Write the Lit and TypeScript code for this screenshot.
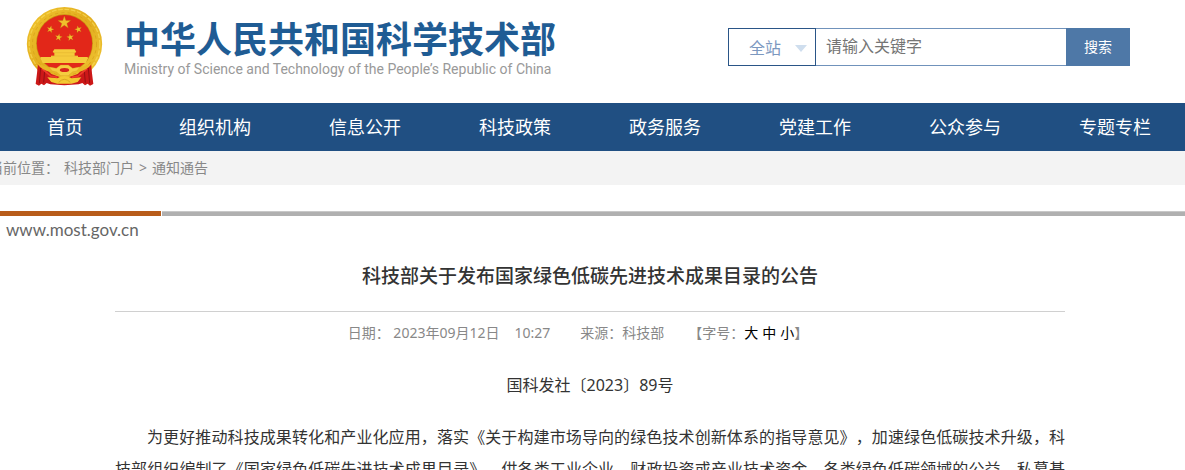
import { LitElement, html, css } from "lit";
import { customElement, state } from "lit/decorators.js";

const STAR = "0,-20 4.7,-6.5 19,-6.2 7.6,2.5 11.8,16.2 0,8 -11.8,16.2 -7.6,2.5 -19,-6.2 -4.7,-6.5";

@customElement("national-emblem")
export class NationalEmblem extends LitElement {
  static styles = css`
    :host { display: block; flex: none; }
    .emblem { display: block; width: 80px; height: 83px; }
  `;

  render() {
    return html`
      <svg class="emblem" viewBox="45 15 240 249" role="img" aria-label="国徽">
        <defs>
          <linearGradient id="gold" x1="0" y1="0" x2="1" y2="1">
            <stop offset="0" stop-color="#f0c42e" />
            <stop offset="0.5" stop-color="#e2ad1e" />
            <stop offset="1" stop-color="#f2c836" />
          </linearGradient>
        </defs>
        <ellipse cx="163.500" cy="132" rx="113" ry="111" fill="url(#gold)" />
        <ellipse cx="163.500" cy="132" rx="106" ry="104" fill="none" stroke="#f8da58" stroke-width="4" stroke-dasharray="14 5" opacity="0.7" />
        <ellipse cx="163.500" cy="132" rx="96" ry="94" fill="none" stroke="#d59e1a" stroke-width="3" stroke-dasharray="10 9" opacity="0.7" />
        <ellipse cx="163.500" cy="130" rx="85" ry="87" fill="#c98b12" />
        <ellipse cx="163.500" cy="130" rx="83" ry="85" fill="#e22719" />
        <g fill="#f0c02c" stroke="#b8780f" stroke-width="1">
          <polygon points=${STAR} transform="translate(163 68)" />
          <polygon points=${STAR} transform="translate(121 88) rotate(15) scale(.56)" />
          <polygon points=${STAR} transform="translate(205 88) rotate(-15) scale(.56)" />
          <polygon points=${STAR} transform="translate(146 112) rotate(10) scale(.56)" />
          <polygon points=${STAR} transform="translate(181 112) rotate(-10) scale(.56)" />
        </g>
        <path d="M133 148h61l5 8-5 3v8h10v4h27l4 2-8 16H98l-8-16 4-2h29v-4h10v-8l-5-3z" fill="#f5cb3c" />
        <path d="M131 158h65M124 168h79" stroke="#d8a424" stroke-width="1" />
        <path d="M84 188L104 203L124 222L163 236L203 222L223 203L243 188L246 220L250 252L240 257L233 251L225 256L217 249L206 253L163 256L121 253L110 249L102 256L94 251L87 257L77 252L81 220z" fill="#cc1818" />
        <path d="M92 204L88 250M104 212L101 248M235 204L239 250M223 212L226 248" fill="none" stroke="#960f12" stroke-width="3" />
        <path d="M96 206L122 228L142 232M231 206L205 228L185 232" fill="none" stroke="#ee3b2a" stroke-width="5" />
        <path d="M72 178Q90 196 112 201L132 204L124 216Q96 212 80 190zM255 178Q237 196 215 201L195 204L203 216Q231 212 247 190z" fill="#e8b624" />
        <path d="M117 201L139 205L152 195H175L188 205L210 201L200 213L187 216L175 227H152L140 216L127 213z" fill="#f5cd40" stroke="#d49d1c" stroke-width="1" />
        <ellipse cx="163.500" cy="210" rx="14" ry="6" fill="#d6251b" />
        <path d="M112 232L142 235Q163 221 185 235L214 232L203 246L184 251H142L124 246z" fill="#f3c832" />
        <path d="M146 247Q163 229 181 247" fill="none" stroke="#cf941b" stroke-width="2" />
      </svg>
    `;
  }
}

@customElement("site-header")
export class SiteHeader extends LitElement {
  static styles = css`
    :host { display: block; }
    .header {
      display: flex;
      justify-content: space-between;
      align-items: flex-start;
      gap: 24px;
      min-height: 98px;
      padding: 5px 55px 0 25px;
    }
    .brand { display: flex; gap: 19px; color: inherit; text-decoration: none; }
    .names { padding-top: 14px; white-space: nowrap; }
    .name { margin: 0; font-size: 36px; line-height: 42px; font-weight: 700; color: #1f5c94; }
    .english { margin: 0; font-family: Roboto, sans-serif; font-size: 14px; line-height: 16px; color: #999; }
    .search { display: flex; height: 38px; margin-top: 23px; }
    .scope { position: relative; width: 88px; }
    .select, .keyword, .submit {
      box-sizing: border-box;
      height: 100%;
      margin: 0;
      border-radius: 0;
      font-family: inherit;
      outline: none;
    }
    .select {
      width: 100%;
      padding: 2px 20px 0 20px;
      border: 1px solid #2a5587;
      appearance: none;
      background: #fff;
      font-size: 16px;
      color: #7c98bf;
    }
    .arrow {
      position: absolute;
      right: 9px;
      top: 17px;
      width: 12px;
      height: 7px;
      background: #cfdeee;
      clip-path: polygon(0 0, 100% 0, 50% 100%);
      pointer-events: none;
    }
    .keyword {
      width: 250px;
      padding: 0 10px 2px;
      border: 1px solid #7092bb;
      border-width: 1px 0;
      background: #fff;
      font-size: 16px;
      color: #333;
    }
    .keyword::placeholder { color: #757575; opacity: 1; }
    .submit {
      width: 64px;
      padding: 0 0 2px;
      border: 0;
      background: #4e78a7;
      font-size: 14px;
      color: #fff;
    }
  `;

  render() {
    return html`
      <header class="header">
        <a class="brand" href="#">
          <national-emblem></national-emblem>
          <div class="names">
            <p class="name">中华人民共和国科学技术部</p>
            <p class="english" lang="en">Ministry of Science and Technology of the People’s Republic of China</p>
          </div>
        </a>
        <form class="search" @submit=${(e: Event) => e.preventDefault()}>
          <div class="scope">
            <select class="select" aria-label="搜索范围">
              <option>全站</option>
            </select>
            <span class="arrow"></span>
          </div>
          <input class="keyword" type="text" aria-label="关键字" placeholder="请输入关键字" />
          <button class="submit" type="submit">搜索</button>
        </form>
      </header>
    `;
  }
}

@customElement("site-nav")
export class SiteNav extends LitElement {
  static styles = css`
    :host { display: block; }
    .nav { background: #204f82; overflow: hidden; }
    .items {
      display: grid;
      grid-template-columns: repeat(8, 1fr);
      margin: 0 -5px 0 -10px;
      padding: 0;
      list-style: none;
    }
    .link {
      display: block;
      font-size: 18px;
      line-height: 48px;
      text-align: center;
      white-space: nowrap;
      color: #fff;
      text-decoration: none;
    }
  `;

  private items = ["首页", "组织机构", "信息公开", "科技政策", "政务服务", "党建工作", "公众参与", "专题专栏"];

  render() {
    return html`
      <nav class="nav">
        <ul class="items">
          ${this.items.map((item) => html`<li><a class="link" href="#">${item}</a></li>`)}
        </ul>
      </nav>
    `;
  }
}

@customElement("notice-article")
export class NoticeArticle extends LitElement {
  static styles = css`
    :host { display: block; }
    .article { margin: 0 120px 0 115px; color: #333; }
    .title {
      margin: 0;
      padding: 18px 0 21px;
      border-bottom: 1px solid #d0d0d0;
      font-size: 19px;
      line-height: 28px;
      font-weight: 500;
      text-align: center;
    }
    .meta {
      display: flex;
      justify-content: center;
      padding-right: 24px;
      font-size: 14px;
      line-height: 42px;
      color: #888;
      white-space: nowrap;
    }
    .time { margin: 0 30px 0 15px; }
    .sizes { display: flex; margin-left: 24px; }
    .choices { display: flex; gap: 4px; }
    .size {
      padding: 0;
      border: 0;
      background: none;
      font: inherit;
      color: #000;
      cursor: pointer;
    }
    .number { margin: 15px 0 20px; font-size: 16px; line-height: 32px; text-align: center; }
    .body {
      margin: 0;
      font-size: 16px;
      line-height: 32px;
      text-indent: 2em;
      text-align: justify;
      text-align-last: justify;
    }
  `;

  @state() private scale = "中";

  render() {
    return html`
      <article class="article">
        <h1 class="title">科技部关于发布国家绿色低碳先进技术成果目录的公告</h1>
        <div class="meta">
          <span>日期： 2023年09月12日</span>
          <span class="time">10:27</span>
          <span>来源：科技部</span>
          <span class="sizes">
            【字号：
            <span class="choices">
              ${["大", "中", "小"].map(
                (s) => html`<button class="size" type="button" aria-pressed=${this.scale === s} @click=${() => (this.scale = s)}>${s}</button>`
              )}
            </span>
            】
          </span>
        </div>
        <p class="number">国科发社〔2023〕89号</p>
        <p class="body">为更好推动科技成果转化和产业化应用，落实《关于构建市场导向的绿色技术创新体系的指导意见》，加速绿色低碳技术升级，科技部组织编制了《国家绿色低碳先进技术成果目录》，供各类工业企业、财政投资或产业技术资金、各类绿色低碳领域的公益、私募基</p>
      </article>
    `;
  }
}

@customElement("app-root")
export class AppRoot extends LitElement {
  static styles = css`
    :host {
      display: block;
      overflow: hidden;
      background: #fff;
      font-family: "Noto Sans", "Noto Sans CJK SC", sans-serif;
      text-spacing-trim: space-all;
    }
    .crumbs {
      display: flex;
      gap: 5px;
      margin-left: -11px;
      background: #f3f3f3;
      font-size: 14px;
      line-height: 34px;
      color: #888;
      white-space: nowrap;
    }
    .crumb { color: inherit; text-decoration: none; }
    .stripe { display: flex; gap: 1px; height: 5px; margin-top: 26px; }
    .accent { width: 161px; background: #b85c1a; }
    .rest { flex: 1; box-sizing: border-box; border-top: 1px solid #c8c8c8; background: #b0b0b0; }
    .domain {
      margin: 0;
      padding-left: 6px;
      font-family: Lato, sans-serif;
      font-size: 17px;
      line-height: 28px;
      color: #666;
    }
  `;

  render() {
    return html`
      <site-header></site-header>
      <site-nav></site-nav>
      <div class="crumbs">
        <span>当前位置：</span>
        <a class="crumb" href="#">科技部门户</a>
        <span>&gt;</span>
        <a class="crumb" href="#">通知通告</a>
      </div>
      <div class="stripe"><span class="accent"></span><span class="rest"></span></div>
      <p class="domain">www.most.gov.cn</p>
      <notice-article></notice-article>
    `;
  }
}
